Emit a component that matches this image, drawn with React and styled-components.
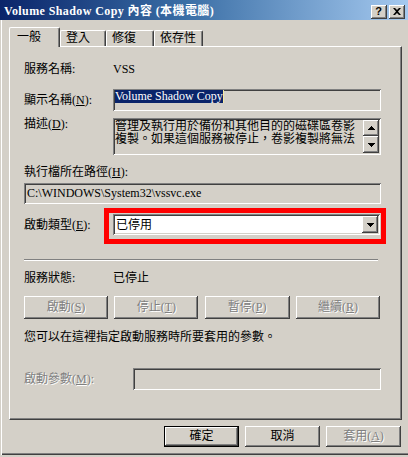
import React from "react";
import styled, { createGlobalStyle, css } from "styled-components";

const FACE = "#D4D0C8";
const SHADOW = "#808080";
const DARK = "#404040";
const LIGHT = "#FFFFFF";
const SEL = "#0A246A";

const Global = createGlobalStyle`
  html, body { margin: 0; padding: 0; background: ${FACE}; overflow: hidden; }
  body {
    font-family: "Liberation Serif", "Noto Sans CJK TC", serif;
    font-size: 12px;
    color: #000;
  }
  * { box-sizing: border-box; }
`;

const raised = css`
  box-shadow: inset -1px -1px 0 ${DARK}, inset 1px 1px 0 ${LIGHT},
    inset -2px -2px 0 ${SHADOW};
`;
const sunken = css`
  box-shadow: inset 1px 1px 0 ${SHADOW}, inset -1px -1px 0 ${LIGHT},
    inset 2px 2px 0 ${DARK}, inset -2px -2px 0 ${FACE};
`;

const Window = styled.div`
  width: 410px;
  height: 455px;
  display: flex;
  flex-direction: column;
  background: ${FACE};
`;

const TitleBar = styled.div`
  height: 20px;
  flex: none;
  display: flex;
  justify-content: space-between;
  padding: 0 5px 0 4px;
  background: linear-gradient(to right, #0a246a 0%, #3a6ea5 45%, #a6caf0 100%);
`;

const TitleText = styled.div`
  color: #fff;
  font-weight: bold;
  font-size: 12px;
  line-height: 14px;
  letter-spacing: 0.4px;
  white-space: nowrap;
  margin-top: 4px;
`;

const TitleButtons = styled.div`
  display: flex;
  gap: 2px;
  margin-top: 5px;
`;

const CaptionButton = styled.div`
  width: 16px;
  height: 14px;
  background: ${FACE};
  ${raised};
  display: flex;
  align-items: center;
  justify-content: center;
  font-family: "Liberation Sans", sans-serif;
  font-weight: bold;
  font-size: 11px;
  line-height: 1;
  padding: 0 1px 1px 0;
`;

const Body = styled.div`
  flex: 1;
  display: flex;
  flex-direction: column;
  padding: 7px 8px 0 9px;
  box-shadow: inset 1px 0 0 ${FACE}, inset 2px 0 0 ${LIGHT},
    inset 0 -1px 0 ${DARK}, inset 0 -2px 0 ${SHADOW};
`;

const TabRow = styled.div`
  height: 20px;
  display: flex;
  align-items: flex-end;
  margin-bottom: -1px;
  position: relative;
  z-index: 1;
`;

const Tab = styled.div`
  width: ${(p) => p.$w}px;
  height: ${(p) => (p.$active ? 20 : 16)}px;
  margin-bottom: ${(p) => (p.$active ? 0 : 1)}px;
  background: ${FACE};
  border-top: 1px solid ${LIGHT};
  border-left: 1px solid ${LIGHT};
  border-right: 1px solid ${DARK};
  border-radius: 2px 2px 0 0;
  box-shadow: inset -1px 0 0 ${SHADOW};
  padding: ${(p) => (p.$active ? "2px 0 0 7px" : "0 0 0 5px")};
  line-height: 15px;
  white-space: nowrap;
`;

const Panel = styled.div`
  height: 374px;
  border-top: 1px solid ${LIGHT};
  border-left: 1px solid ${LIGHT};
  border-right: 1px solid ${DARK};
  border-bottom: 1px solid ${DARK};
  box-shadow: inset -1px -1px 0 ${SHADOW};
  padding-left: 14px;
  display: flex;
  flex-direction: column;
`;

const Row = styled.div`
  display: flex;
  align-items: ${(p) => (p.$top ? "flex-start" : "center")};
  margin-top: ${(p) => p.$mt}px;
  height: ${(p) => p.$h}px;
`;

const Label = styled.div`
  width: ${(p) => p.$w || 89}px;
  flex: none;
  line-height: 14px;
  white-space: nowrap;
  margin-top: ${(p) => p.$mt || 0}px;
  ${(p) =>
    p.$disabled &&
    css`
      color: ${SHADOW};
      text-shadow: 1px 1px 0 ${LIGHT};
    `}
`;

const Text = styled.div`
  line-height: 14px;
  white-space: nowrap;
`;

const Field = styled.div`
  width: ${(p) => p.$w}px;
  height: ${(p) => p.$h}px;
  background: ${(p) => (p.$white ? LIGHT : FACE)};
  ${sunken};
  padding: ${(p) => p.$pad || "2px 2px"};
  display: flex;
  align-items: ${(p) => (p.$center ? "center" : "flex-start")};
  line-height: 13px;
  white-space: nowrap;
  overflow: hidden;
  position: relative;
`;

const Selected = styled.span`
  background: ${SEL};
  color: #fff;
`;

const Caret = styled.span`
  display: inline-block;
  width: 1px;
  height: 13px;
  background: #f5eaa0;
  vertical-align: top;
`;

const DescText = styled.div`
  flex: 1;
  line-height: 13px;
  overflow: hidden;
`;

const DescLine = styled.div`
  height: 13px;
  white-space: nowrap;
`;

const ScrollCol = styled.div`
  width: 16px;
  height: 100%;
  display: flex;
  flex-direction: column;
  justify-content: space-between;
`;

const ArrowButton = styled.div`
  width: 16px;
  height: ${(p) => p.$h || 16}px;
  background: ${FACE};
  ${raised};
  display: flex;
  align-items: center;
  justify-content: center;
`;

const ComboWrap = styled.div`
  position: relative;
`;

const Highlight = styled.div`
  position: absolute;
  left: -9px;
  right: -6px;
  top: -6px;
  bottom: -9px;
  border: 5px solid #ff0000;
  pointer-events: none;
`;

const ComboText = styled.div`
  flex: 1;
  padding-left: 1px;
  line-height: 14px;
`;

const Separator = styled.div`
  width: 354px;
  height: 2px;
  margin-top: 24px;
  border-top: 1px solid ${SHADOW};
  border-bottom: 1px solid ${LIGHT};
  flex: none;
`;

const ButtonRow = styled.div`
  display: flex;
  justify-content: ${(p) => p.$justify || "space-between"};
  gap: ${(p) => p.$gap || 0}px;
  width: ${(p) => (p.$w ? `${p.$w}px` : "auto")};
  margin-top: ${(p) => p.$mt}px;
  padding-right: ${(p) => p.$pr || 0}px;
`;

const Button = styled.button`
  width: ${(p) => p.$w}px;
  height: ${(p) => p.$h}px;
  background: ${FACE};
  border: ${(p) => (p.$default ? "1px solid #000" : "none")};
  padding: 0 0 1px 0;
  margin: 0;
  font: inherit;
  line-height: 14px;
  color: #000;
  ${raised};
  &:disabled {
    color: ${SHADOW};
    text-shadow: 1px 1px 0 ${LIGHT};
  }
`;

const Up = () => (
  <svg width="7" height="4" viewBox="0 0 7 4">
    <path d="M3 0h1v1h1v1h1v1h1v1H0V3h1V2h1V1h1z" fill="#000" />
  </svg>
);
const Down = () => (
  <svg width="7" height="4" viewBox="0 0 7 4">
    <path d="M0 0h7v1H6v1H5v1H4v1H3V3H2V2H1V1H0z" fill="#000" />
  </svg>
);
const CloseGlyph = () => (
  <svg width="8" height="7" viewBox="0 0 8 7">
    <path
      d="M0 0h2l2 2 2-2h2L5 3.5 8 7H6L4 5 2 7H0l3-3.5z"
      fill="#000"
    />
  </svg>
);

export default function App() {
  return (
    <>
      <Global />
      <Window>
        <TitleBar>
          <TitleText>Volume Shadow Copy 內容 (本機電腦)</TitleText>
          <TitleButtons>
            <CaptionButton>?</CaptionButton>
            <CaptionButton>
              <CloseGlyph />
            </CaptionButton>
          </TitleButtons>
        </TitleBar>
        <Body>
          <TabRow>
            <Tab $active $w={51}>一般</Tab>
            <Tab $w={46}>登入</Tab>
            <Tab $w={48}>修復</Tab>
            <Tab $w={49}>依存性</Tab>
          </TabRow>
          <Panel>
            <Row $mt={15} $h={14}>
              <Label>服務名稱:</Label>
              <Text>VSS</Text>
            </Row>
            <Row $mt={13} $h={22}>
              <Label>
                顯示名稱(<u>N</u>):
              </Label>
              <Field $w={268} $h={22} $pad="1px 2px">
                <Selected>Volume Shadow Copy</Selected>
                <Caret />
              </Field>
            </Row>
            <Row $mt={7} $h={37} $top>
              <Label $mt={-1}>
                描述(<u>D</u>):
              </Label>
              <Field $w={268} $h={37} $pad="2px 2px 2px 2px">
                <DescText>
                  <DescLine>管理及執行用於備份和其他目的的磁碟區卷影</DescLine>
                  <DescLine>複製。如果這個服務被停止，卷影複製將無法</DescLine>
                </DescText>
                <ScrollCol>
                  <ArrowButton $h={16}>
                    <Up />
                  </ArrowButton>
                  <ArrowButton $h={17}>
                    <Down />
                  </ArrowButton>
                </ScrollCol>
              </Field>
            </Row>
            <Row $mt={10} $h={14}>
              <Label $w={200}>
                執行檔所在路徑(<u>H</u>):
              </Label>
            </Row>
            <Row $mt={4} $h={21}>
              <Field $w={357} $h={21} $center $pad="2px 3px">
                C:\WINDOWS\System32\vssvc.exe
              </Field>
            </Row>
            <Row $mt={10} $h={21}>
              <Label>
                啟動類型(<u>E</u>):
              </Label>
              <ComboWrap>
                <Field $w={267} $h={21} $white $center $pad="2px 2px">
                  <ComboText>已停用</ComboText>
                  <ArrowButton $h={17}>
                    <Down />
                  </ArrowButton>
                </Field>
                <Highlight />
              </ComboWrap>
            </Row>
            <Separator />
            <Row $mt={10} $h={14}>
              <Label>服務狀態:</Label>
              <Text>已停止</Text>
            </Row>
            <ButtonRow $mt={11} $w={356}>
              <Button $w={84} $h={23} disabled>
                啟動(<u>S</u>)
              </Button>
              <Button $w={84} $h={23} disabled>
                停止(<u>T</u>)
              </Button>
              <Button $w={85} $h={23} disabled>
                暫停(<u>P</u>)
              </Button>
              <Button $w={84} $h={23} disabled>
                繼續(<u>R</u>)
              </Button>
            </ButtonRow>
            <Row $mt={11} $h={14}>
              <Text>您可以在這裡指定啟動服務時所要套用的參數。</Text>
            </Row>
            <Row $mt={24} $h={22}>
              <Label $w={109} $disabled>
                啟動參數(<u>M</u>):
              </Label>
              <Field $w={248} $h={22} />
            </Row>
          </Panel>
          <ButtonRow $mt={6} $justify="flex-end" $gap={6} $pr={1}>
            <Button $w={75} $h={21} $default>
              確定
            </Button>
            <Button $w={75} $h={21}>
              取消
            </Button>
            <Button $w={75} $h={21} disabled>
              套用(<u>A</u>)
            </Button>
          </ButtonRow>
        </Body>
      </Window>
    </>
  );
}
